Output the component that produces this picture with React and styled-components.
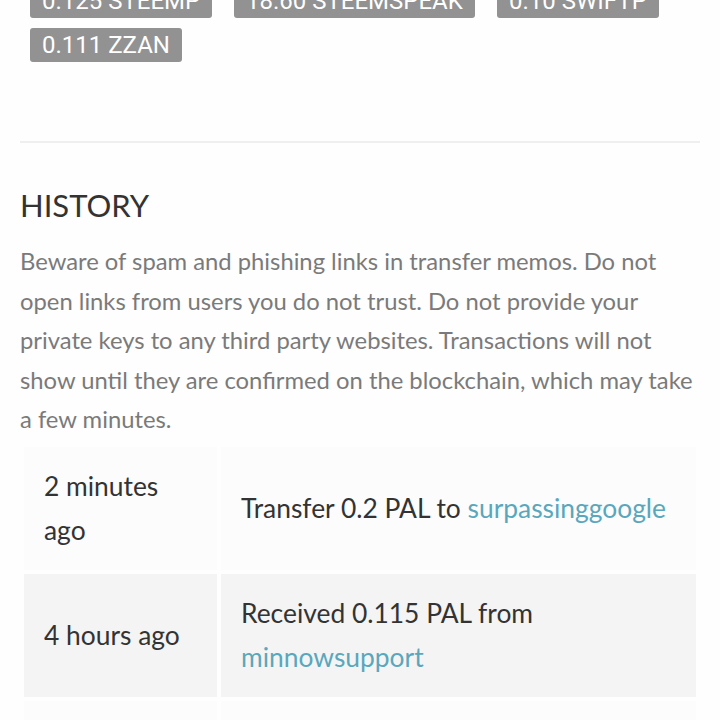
import React from 'react';
import styled, { createGlobalStyle } from 'styled-components';

const GlobalStyle = createGlobalStyle`
  body {
    margin: 0;
    background: #fefefe;
    font-family: Lato, "Open Sans", sans-serif;
  }
`;

const Page = styled.div`
  width: 720px;
  height: 720px;
  overflow: hidden;
  padding: 0 20px;
  box-sizing: border-box;
`;

const BalanceGrid = styled.div`
  display: grid;
  grid-template-columns: 204px 263px auto;
  row-gap: 10px;
  padding-left: 10px;
  margin-top: -16px;
  justify-items: start;
`;

const Badge = styled.span`
  display: inline-block;
  height: 34px;
  line-height: 34px;
  padding: 0 12px;
  background: #929292;
  color: #fff;
  border-radius: 3px;
  font-family: Roboto, sans-serif;
  font-size: 24px;
  white-space: nowrap;
`;

const Divider = styled.hr`
  border: none;
  height: 2px;
  background: #efefef;
  margin: 79px 0 0;
`;

const Title = styled.h2`
  margin: 42px 0 0;
  font-size: 31px;
  font-weight: 400;
  color: #333;
  line-height: 40px;
`;

const Notice = styled.p`
  margin: 17px 0 0;
  font-size: 23.8px;
  line-height: 39.6px;
  color: #7a7a7a;
`;

const HistoryTable = styled.table`
  width: 680px;
  margin-top: 3px;
  border-collapse: separate;
  border-spacing: 4px;
  font-size: 26.4px;
  color: #333;
  line-height: 44px;
`;

const Row = styled.tr`
  background: ${(p) => (p.$striped ? '#f4f4f4' : '#fcfcfc')};
`;

const Cell = styled.td`
  padding: 17.5px 20px;
  vertical-align: middle;
  width: ${(p) => p.$w || 'auto'};
`;

const UserLink = styled.a`
  color: #5aa7bd;
  text-decoration: none;
`;

const balances = [
  '0.125 STEEMP',
  '18.60 STEEMSPEAK',
  '0.10 SWIFTP',
  '0.111 ZZAN',
];

const history = [
  { when: '2 minutes ago', text: 'Transfer 0.2 PAL to ', user: 'surpassinggoogle' },
  { when: '4 hours ago', text: 'Received 0.115 PAL from ', user: 'minnowsupport' },
  { when: '5 hours ago', text: 'Received 0.1 PAL from ', user: 'steemitboard' },
];

const App = () => (
  <Page>
    <GlobalStyle />
    <BalanceGrid>
      {balances.map((b) => (
        <Badge key={b}>{b}</Badge>
      ))}
    </BalanceGrid>
    <Divider />
    <Title>HISTORY</Title>
    <Notice>
      Beware of spam and phishing links in transfer memos. Do not open links from users you do
      not trust. Do not provide your private keys to any third party websites. Transactions will
      not show until they are confirmed on the blockchain, which may take a few minutes.
    </Notice>
    <HistoryTable>
      <tbody>
        {history.map((h, i) => (
          <Row key={i} $striped={i % 2 === 1}>
            <Cell $w="153px">{h.when}</Cell>
            <Cell>
              {h.text}
              <UserLink href="#">{h.user}</UserLink>
            </Cell>
          </Row>
        ))}
      </tbody>
    </HistoryTable>
  </Page>
);

export default App;
